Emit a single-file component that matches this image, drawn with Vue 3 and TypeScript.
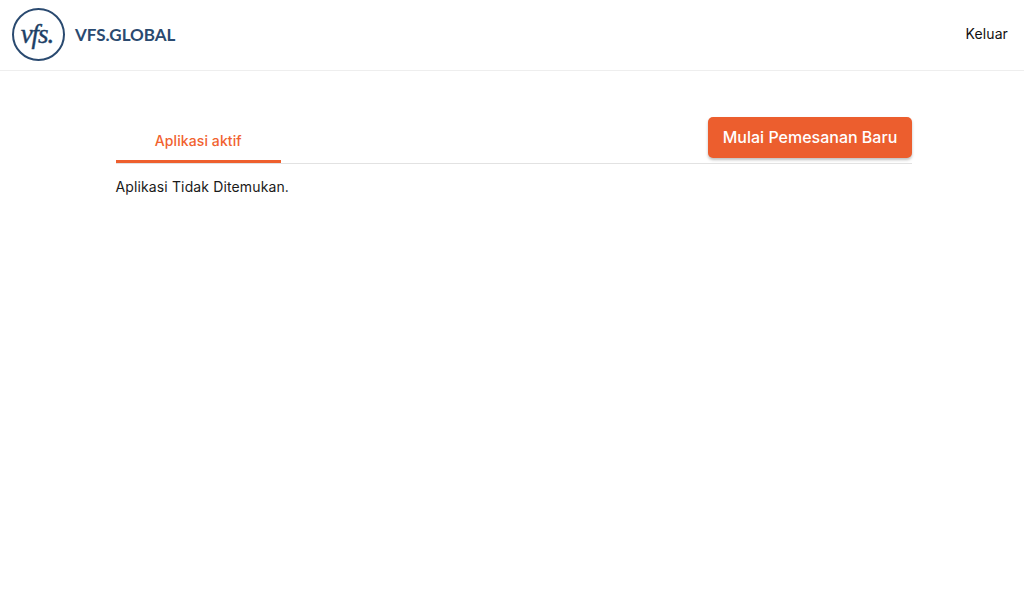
<script setup lang="ts">
const tabs: string[] = ['Aplikasi aktif'];
</script>

<template>
  <div class="page">
    <header class="topbar">
      <div class="brand">
        <div class="seal"><span>vfs.</span></div>
        <span class="brand-name">VFS.GLOBAL</span>
      </div>
      <a class="logout">Keluar</a>
    </header>
    <main class="content">
      <div class="tab-row">
        <div class="tab active" v-for="tab in tabs" :key="tab">{{ tab }}</div>
        <button class="new-booking">Mulai Pemesanan Baru</button>
      </div>
      <p class="empty">Aplikasi Tidak Ditemukan.</p>
    </main>
  </div>
</template>

<style>
body {
  background: #fff;
}
</style>

<style scoped>
.page {
  height: 613px;
  overflow: hidden;
  font-family: Inter, "Liberation Sans", sans-serif;
  color: #1a1a1a;
}

.topbar {
  height: 71px;
  box-sizing: border-box;
  border-bottom: 1px solid #eeeeee;
  padding: 8px 16px 0 12px;
  display: flex;
  justify-content: space-between;
  align-items: flex-start;
}

.brand {
  display: flex;
  align-items: center;
  gap: 10px;
}

.seal {
  width: 53px;
  height: 53px;
  box-sizing: border-box;
  border: 2px solid #2a4a70;
  border-radius: 50%;
  display: flex;
  align-items: center;
  justify-content: center;
  color: #1d3f66;
  font-family: "Liberation Serif", serif;
  font-style: italic;
  font-size: 27px;
  letter-spacing: -1px;
  -webkit-text-stroke: 0.4px #1d3f66;
}

.seal span {
  margin-right: 3px;
}

.brand-name {
  font-family: Lato, "Liberation Sans", sans-serif;
  font-size: 17px;
  font-weight: 700;
  color: #2a4a70;
}

.logout {
  font-size: 14px;
  line-height: 17px;
  margin-top: 17px;
  letter-spacing: 0.1px;
  color: #111;
}

.content {
  width: 796.5px;
  margin: 45px 0 0 115.5px;
}

.tab-row {
  display: flex;
  justify-content: space-between;
  align-items: flex-start;
  height: 47px;
  border-bottom: 1px solid #e2e2e2;
}

.tab {
  width: 165.5px;
  height: 47px;
  box-sizing: border-box;
  border-bottom: 3px solid #ee5f2e;
  padding-top: 16px;
  text-align: center;
  font-size: 14px;
  line-height: 17px;
  font-weight: 500;
  letter-spacing: 0.1px;
  color: #f1622f;
}

.new-booking {
  width: 204px;
  height: 41.5px;
  margin-top: 0.5px;
  border: none;
  border-radius: 5px;
  background: #ec5e2e;
  color: #fff;
  font-family: inherit;
  font-size: 16px;
  font-weight: 500;
  box-shadow: 0 2px 3px rgba(0, 0, 0, 0.25);
}

.empty {
  margin: 14px 0 0;
  font-size: 14px;
  line-height: 17px;
  letter-spacing: 0.13px;
  color: #1a1a1a;
}
</style>
